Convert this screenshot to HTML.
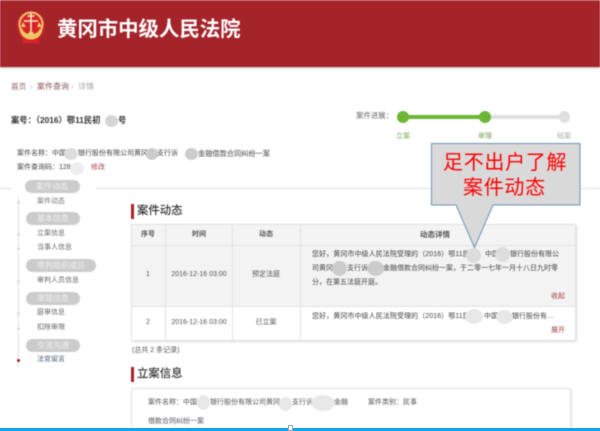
<!DOCTYPE html>
<html lang="zh"><head><meta charset="utf-8"><style>
html,body{margin:0;padding:0;background:#fff}
#p{position:relative;width:600px;height:431px;overflow:hidden;background:#fff;font-family:"Liberation Sans","Noto Sans CJK SC",sans-serif;color:#555;font-size:7px}
#b{position:absolute;inset:0;filter:blur(.4px)}
.t{position:absolute;white-space:nowrap;line-height:12px}
.r{position:absolute}
.pill{position:absolute;background:#ccc;border-radius:7px;color:#eee;font-size:8px;line-height:13px;padding-left:11px;box-sizing:border-box;height:13px}
.s{position:absolute;border-radius:50%;background:#ddd}
.d{position:absolute;left:17px;width:3px;height:3px;border-radius:50%;background:#ddd}
.h{position:absolute;left:137px;font-size:11.4px;line-height:16px;font-weight:500;color:#333}
.bar{position:absolute;left:131px;width:3px;height:15px;background:#a52227}
.c{text-align:center;transform:translateX(-50%)}
.x{color:#444}
</style></head><body><div id="p"><div id="b">
<div class="r" style="left:0;top:0;width:600px;height:67px;background:#a5242a;border-top:1px solid #b7494d;box-sizing:border-box;box-shadow:0 1px 2px #bbb"></div>
<svg class="r" style="left:16px;top:10px" width="30" height="34" viewBox="0 0 30 34">
<path d="M15 1C7 1 1 7 1 15c0 6 3 11 6 14l-1 4h18l-1-4c3-3 6-8 6-14C29 7 23 1 15 1z" fill="#d8232a"/>
<circle cx="15" cy="14" r="11.500" fill="none" stroke="#e8c468" stroke-width="2"/>
<path d="M5 19c1 6 5 9 10 9s9-3 10-9" fill="none" stroke="#f0c860" stroke-width="3"/>
<path d="M15 3v20M11.500 6h7M8 11h14" stroke="#f6e8c0" stroke-width="1.600" fill="none"/>
<path d="M7 12l-2 5h5zM23 12l-2 5h5z" fill="#eecb70"/>
<path d="M10 26l5-6 5 6z" fill="#eecb70"/>
</svg>
<div class="t" style="left:57px;top:18px;font-size:20.4px;line-height:24px;font-weight:700;color:#fff">黄冈市中级人民法院</div>

<div class="t" style="left:11px;top:81px;font-size:7.6px;color:#8a5a5a">首页</div>
<div class="t" style="left:30px;top:81px;font-size:8px;color:#bbb">›</div>
<div class="t" style="left:37px;top:81px;font-size:8px;color:#8a5a5a">案件查询</div>
<div class="t" style="left:71px;top:81px;font-size:8px;color:#bbb">›</div>
<div class="t" style="left:78px;top:81px;font-size:8px;color:#aaa">详情</div>

<div class="t" style="left:11px;top:114px;font-weight:700;color:#333;font-size:8.3px">案号：（2016）鄂11民初</div>
<div class="t" style="left:118px;top:114px;font-weight:700;color:#333;font-size:8.3px">号</div>
<div class="s" style="left:105px;top:115px;width:13px;height:12px;background:#d5d5d5"></div>

<div class="t x" style="left:17px;top:148px">案件名称：中国</div>
<div class="t x" style="left:78px;top:148px">银行股份有限公司黄冈</div>
<div class="t x" style="left:157px;top:148px">支行诉</div>
<div class="t x" style="left:198px;top:148px;font-size:7.2px">金融借款合同纠纷一案</div>
<div class="s" style="left:64px;top:148px;width:14px;height:12px;background:#ddd"></div>
<div class="s" style="left:146px;top:148px;width:12px;height:12px;background:#ccc"></div>
<div class="s" style="left:185px;top:148px;width:13px;height:12px;background:#ccc"></div>
<div class="t x" style="left:17px;top:162px">案件查询码：128</div>
<div class="s" style="left:70px;top:162px;width:14px;height:13px;background:#eee"></div>
<div class="t" style="left:91px;top:162px;color:#a5444a">修改</div>

<div class="t" style="left:356px;top:110px;font-size:7.4px;color:#666">案件进展：</div>
<div class="r" style="left:403px;top:115px;width:82px;height:4px;background:#6cb535"></div>
<div class="r" style="left:485px;top:115px;width:79px;height:4px;background:#e0e0e0"></div>
<div class="s" style="left:397px;top:111px;width:12px;height:12px;background:#6cb535"></div>
<div class="s" style="left:479px;top:111px;width:12px;height:12px;background:#6cb535"></div>
<div class="s" style="left:559px;top:111px;width:11px;height:12px;background:#e0e0e0"></div>
<div class="t c" style="left:403px;top:131px;color:#7da55a">立案</div>
<div class="t c" style="left:485px;top:131px;color:#7da55a">审理</div>
<div class="t c" style="left:564px;top:131px;color:#aaa">结案</div>

<div class="r" style="left:0;top:188px;width:12px;height:1px;background:#e2e2e2"></div>
<div class="r" style="left:96px;top:188px;width:504px;height:1px;background:#e2e2e2"></div>
<div class="r" style="left:18px;top:197px;width:1px;height:170px;background:#e2e2e2"></div>
<div class="pill" style="left:25px;top:180px;width:55px">案件动态</div>
<div class="pill" style="left:26px;top:212px;width:54px">基本信息</div>
<div class="pill" style="left:26px;top:259px;width:70px">审判组织成员</div>
<div class="pill" style="left:26px;top:292px;width:54px">审理信息</div>
<div class="pill" style="left:26px;top:339px;width:54px">交流沟通</div>
<div class="d" style="top:201px"></div><div class="d" style="top:233px"></div><div class="d" style="top:247px"></div><div class="d" style="top:280px"></div><div class="d" style="top:312px"></div><div class="d" style="top:327px"></div>
<div class="d" style="top:359px;background:#a5141c"></div>
<div class="t" style="left:37px;top:196px;color:#777">案件动态</div>
<div class="t" style="left:37px;top:228px;color:#666">立案信息</div>
<div class="t" style="left:37px;top:242px;color:#666">当事人信息</div>
<div class="t" style="left:37px;top:275px;color:#666">审判人员信息</div>
<div class="t" style="left:37px;top:307px;color:#666">庭审信息</div>
<div class="t" style="left:37px;top:322px;color:#666">扣除审限</div>
<div class="t" style="left:37px;top:354px;color:#567">法官留言</div>

<div class="bar" style="top:204px"></div>
<div class="h" style="top:203px">案件动态</div>

<div class="r" style="left:131px;top:224px;width:445px;height:117px;background:#fff;border:1px solid #e2e2e2;box-sizing:border-box;box-shadow:1px 1px 2px #ddd"></div>
<div class="r" style="left:132px;top:225px;width:443px;height:20px;background:#f4f4f4"></div>
<div class="r" style="left:132px;top:246px;width:443px;height:60px;background:#f3f3f3"></div>
<div class="r" style="left:132px;top:245px;width:443px;height:1px;background:#e4e4e4"></div>
<div class="r" style="left:132px;top:306px;width:443px;height:1px;background:#e2e2e2"></div>
<div class="r" style="left:165px;top:225px;width:1px;height:115px;background:#e2e2e2"></div>
<div class="r" style="left:232px;top:225px;width:1px;height:115px;background:#e2e2e2"></div>
<div class="r" style="left:300px;top:225px;width:1px;height:115px;background:#e2e2e2"></div>
<div class="t c" style="left:148px;top:229px;font-weight:700;color:#555">序号</div>
<div class="t c" style="left:199px;top:229px;font-weight:700;color:#555">时间</div>
<div class="t c" style="left:266px;top:229px;font-weight:700;color:#555">动态</div>
<div class="t c" style="left:435px;top:229px;font-size:7.5px;font-weight:700;color:#555">动态详情</div>
<div class="t c" style="left:148px;top:269px">1</div>
<div class="t c" style="left:148px;top:317px">2</div>
<div class="t c" style="left:199px;top:269px">2016-12-16 03:00</div>
<div class="t c" style="left:199px;top:317px">2016-12-16 03:00</div>
<div class="t c" style="left:266px;top:269px">预定法庭</div>
<div class="t c" style="left:266px;top:317px">已立案</div>

<div class="t x" style="left:312px;top:249px;letter-spacing:.08px">您好，黄冈市中级人民法院受理的（2016）鄂11民初</div>
<div class="t x" style="left:485px;top:249px">中国</div>
<div class="t x" style="left:510px;top:249px">银行股份有限公</div>
<div class="t x" style="left:312px;top:263px">司黄冈</div>
<div class="t x" style="left:347px;top:263px">支行诉</div>
<div class="t x" style="left:383px;top:263px">金融借款合同纠纷一案，于二零一七年一月十八日九时零</div>
<div class="t x" style="left:312px;top:277px">分，在第五法庭开庭。</div>
<div class="t x" style="left:312px;top:311px;letter-spacing:.08px">您好，黄冈市中级人民法院受理的（2016）鄂11民初</div>
<div class="t x" style="left:484px;top:311px">中国</div>
<div class="t x" style="left:512px;top:311px">银行股份有…</div>
<div class="s" style="left:466px;top:248px;width:15px;height:15px"></div>
<div class="s" style="left:495px;top:247px;width:15px;height:15px"></div>
<div class="s" style="left:332px;top:261px;width:15px;height:15px;background:#ccc"></div>
<div class="s" style="left:367px;top:261px;width:17px;height:15px;background:#ccc"></div>
<div class="s" style="left:465px;top:309px;width:18px;height:15px;background:#e8e8e8"></div>
<div class="s" style="left:496px;top:310px;width:17px;height:14px;background:#e8e8e8"></div>
<div class="t" style="left:551px;top:291px;color:#a5444a">收起</div>
<div class="t" style="left:551px;top:325px;color:#a5444a">展开</div>
<div class="t" style="left:132px;top:345px">(总共 2 条记录)</div>

<div class="bar" style="top:367px"></div>
<div class="h" style="top:366px">立案信息</div>
<div class="r" style="left:131px;top:388px;width:440px;height:60px;border:1px solid #e2e2e2;box-sizing:border-box;border-radius:2px;box-shadow:1px 1px 2px #e5e5e5"></div>
<div class="t" style="left:148px;top:397px">案件名称：中国</div>
<div class="t" style="left:210px;top:397px">银行股份有限公司黄冈</div>
<div class="t" style="left:292px;top:397px">支行诉</div>
<div class="t" style="left:334px;top:397px">金融</div>
<div class="t" style="left:368px;top:397px">案件类别：民事</div>
<div class="t" style="left:148px;top:416px">借款合同纠纷一案</div>
<div class="s" style="left:197px;top:395px;width:13px;height:15px;background:#e8e8e8"></div>
<div class="s" style="left:279px;top:397px;width:13px;height:14px;background:#e8e8e8"></div>
<div class="s" style="left:311px;top:395px;width:24px;height:16px;background:#e8e8e8"></div>

<svg class="r" style="left:428px;top:140px" width="156" height="112" viewBox="0 0 156 112">
<path d="M3.500 3.500H152V65H65L46.500 107.500 28 65H3.500z" fill="#d9d9d9" stroke="#6f93b8" stroke-width="1"/>
</svg>
<div class="t" style="left:443px;top:151px;font-size:20px;line-height:24px;color:#f00;letter-spacing:.7px">足不出户了解</div>
<div class="t" style="left:463px;top:176px;font-size:20px;line-height:24px;color:#f00;letter-spacing:.7px">案件动态</div>
</div>
<div class="r" style="left:0;top:428px;width:600px;height:3px;background:#12a5ea"></div>
<div class="r" style="left:288px;top:425px;width:5px;height:6px;background:#fff;border:1px solid #8fa9c4;box-sizing:border-box"></div>
</div></body></html>
